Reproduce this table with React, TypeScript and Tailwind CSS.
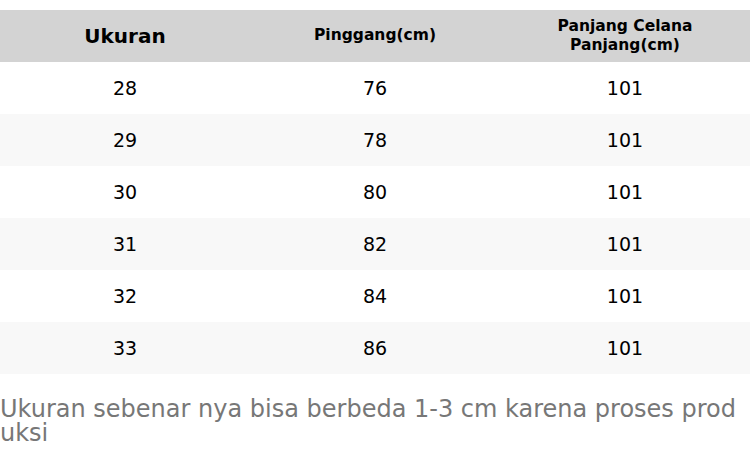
const rows = [
  ["28", "76", "101"],
  ["29", "78", "101"],
  ["30", "80", "101"],
  ["31", "82", "101"],
  ["32", "84", "101"],
  ["33", "86", "101"],
];

export default function App() {
  return (
    <div className="w-[750px] h-[470px] bg-white pt-[10px] font-['DejaVu_Sans',sans-serif] text-black">
      {/* Header */}
      <div className="grid grid-cols-3 h-[52px] bg-[#d3d3d3] items-center text-center font-bold">
        <div className="text-[20px]">Ukuran</div>
        <div className="text-[15.5px]">Pinggang(cm)</div>
        <div className="text-[15.5px] leading-[19px] px-[40px]">Panjang Celana Panjang(cm)</div>
      </div>

      {/* Rows */}
      {rows.map((r, i) => (
        <div
          key={r[0]}
          className={`grid grid-cols-3 h-[52px] items-center text-center text-[19px] ${i % 2 === 1 ? "bg-[#f8f8f8]" : "bg-white"}`}
        >
          {r.map((c, j) => (
            <div key={j}>{c}</div>
          ))}
        </div>
      ))}

      <p className="mt-[23px] text-[24px] leading-[24px] text-[#777777] break-all">
        Ukuran sebenar nya bisa berbeda 1-3 cm karena proses produksi
      </p>
    </div>
  );
}
